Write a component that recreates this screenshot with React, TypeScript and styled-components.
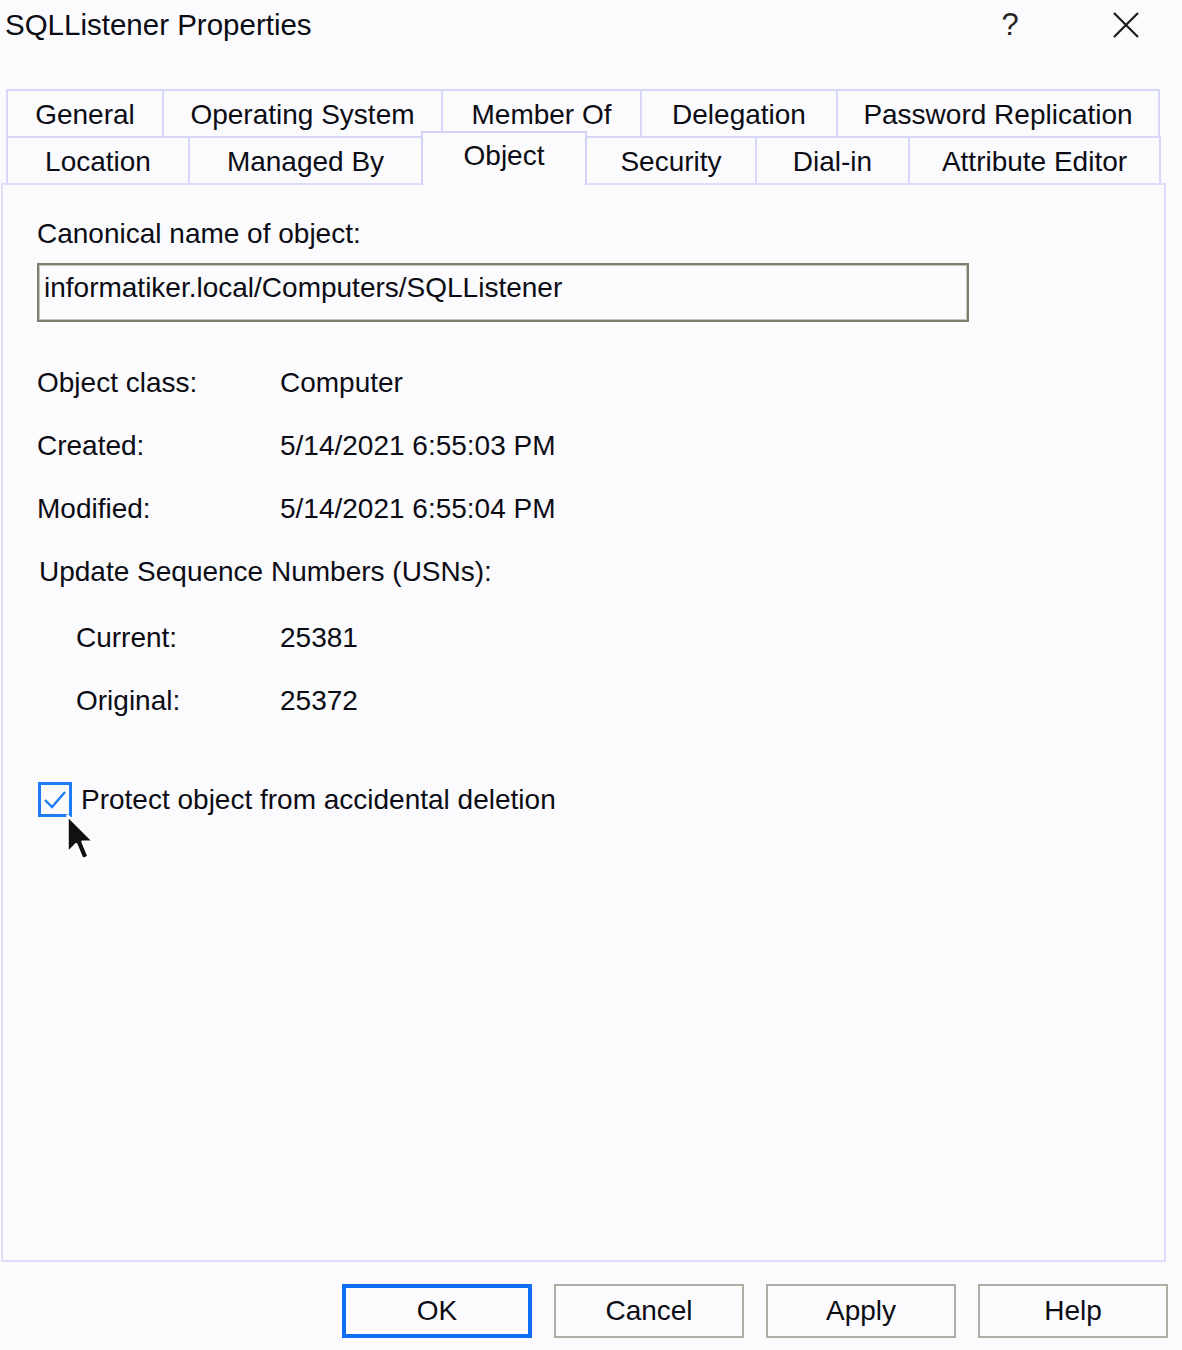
import React from "react";
import styled, { createGlobalStyle, css } from "styled-components";

const Global = createGlobalStyle`
  html, body { margin: 0; padding: 0; background: #fbfbfe; }
  * { box-sizing: border-box; }
`;

const Window = styled.div`
  width: 1182px;
  height: 1350px;
  background: #fbfbfe;
  font-family: "Liberation Sans", Arial, sans-serif;
  font-size: 28px;
  color: #0c0c14;
  display: flex;
  flex-direction: column;
  overflow: hidden;
`;

const TitleBar = styled.div`
  height: 50px;
  display: flex;
  align-items: center;
  padding-left: 5px;
  padding-right: 27px;
  margin-bottom: 39px;
`;

const Title = styled.div`
  font-size: 29.5px;
  flex: 1;
`;

const TitleButton = styled.div<{ $w: number; $gap?: number }>`
  width: ${(p) => p.$w}px;
  height: 46px;
  margin-right: ${(p) => p.$gap ?? 0}px;
  display: flex;
  align-items: center;
  justify-content: center;
  font-size: 31px;
  color: #222;
`;

const TabRows = styled.div`
  margin-left: 6px;
  display: flex;
  flex-direction: column;
`;

const TabRow = styled.div`
  display: flex;
  height: 47px;
`;

const Tab = styled.div<{ $w: number; $selected?: boolean }>`
  width: ${(p) => p.$w}px;
  height: 47px;
  border: 2px solid #d8d8fa;
  border-bottom: none;
  display: flex;
  align-items: center;
  justify-content: center;
  padding-top: 2px;
  white-space: nowrap;
  & + & { margin-left: -2px; }
  ${(p) =>
    p.$selected &&
    css`
      position: relative;
      z-index: 1;
      margin-top: -5px;
      height: 54px;
      padding-top: 0;
      padding-bottom: 6px;
      background: #fbfbfe;
      border-color: #d2d2f6;
    `}
`;

const Panel = styled.div`
  margin-left: 1px;
  width: 1165px;
  height: 1079px;
  border: 2px solid #dcdcfb;
  padding: 32px 0 0 34px;
  display: flex;
  flex-direction: column;
`;

const Label = styled.div`
  line-height: 34px;
  height: 34px;
  white-space: nowrap;
`;

const TextBox = styled.div`
  margin-top: 12px;
  width: 932px;
  height: 59px;
  border: 2px solid #7e7e6e;
  box-shadow: inset 0 0 0 1px #c4c4b8;
  padding: 6px 0 0 5px;
  line-height: 34px;
  white-space: nowrap;
`;

const Fields = styled.div`
  margin-top: 44px;
  display: flex;
  flex-direction: column;
  gap: 29px;
`;

const FieldRow = styled.div<{ $indent?: number; $extra?: number }>`
  display: flex;
  line-height: 34px;
  height: 34px;
  padding-left: ${(p) => p.$indent ?? 0}px;
  margin-top: ${(p) => p.$extra ?? 0}px;
`;

const FieldLabel = styled.div<{ $indent?: number }>`
  width: ${(p) => 243 - (p.$indent ?? 0)}px;
  white-space: nowrap;
`;

const CheckRow = styled.div`
  margin-top: 64px;
  display: flex;
  align-items: center;
  gap: 9px;
  height: 35px;
`;

const CheckBox = styled.div`
  position: relative;
  width: 34px;
  height: 35px;
  margin-left: 1px;
  border: 3px solid #1c7cf4;
  background: #fbfbfe;
  display: flex;
  align-items: center;
  justify-content: center;
`;

const Cursor = styled.svg`
  position: absolute;
  left: 22px;
  top: 28px;
  width: 34px;
  height: 50px;
  overflow: visible;
`;

const ButtonRow = styled.div`
  margin-top: 22px;
  display: flex;
  justify-content: flex-end;
  gap: 22px;
  padding-right: 14px;
`;

const Button = styled.div<{ $default?: boolean }>`
  width: 190px;
  height: 54px;
  display: flex;
  align-items: center;
  justify-content: center;
  border: 2px solid #aeaea2;
  background: #fbfbfe;
  ${(p) =>
    p.$default &&
    css`
      border: 4px solid #0f6ff2;
    `}
`;

const row1 = [
  { t: "General", w: 158 },
  { t: "Operating System", w: 281 },
  { t: "Member Of", w: 201 },
  { t: "Delegation", w: 198 },
  { t: "Password Replication", w: 324 },
];
const row2 = [
  { t: "Location", w: 184 },
  { t: "Managed By", w: 235 },
  { t: "Object", w: 166, sel: true },
  { t: "Security", w: 172 },
  { t: "Dial-in", w: 155 },
  { t: "Attribute Editor", w: 253 },
];

export default function App() {
  return (
    <Window>
      <Global />
      <TitleBar>
        <Title>SQLListener Properties</Title>
        <TitleButton $w={60} $gap={57}>?</TitleButton>
        <TitleButton $w={58}>
          <svg width="28" height="28" viewBox="0 0 28 28">
            <path d="M2 2 L26 26 M26 2 L2 26" stroke="#1a1a1a" strokeWidth="2.2" />
          </svg>
        </TitleButton>
      </TitleBar>
      <TabRows>
        <TabRow>
          {row1.map((t) => (
            <Tab key={t.t} $w={t.w}>
              {t.t}
            </Tab>
          ))}
        </TabRow>
        <TabRow>
          {row2.map((t) => (
            <Tab key={t.t} $w={t.w} $selected={t.sel}>
              {t.t}
            </Tab>
          ))}
        </TabRow>
      </TabRows>
      <Panel>
        <Label>Canonical name of object:</Label>
        <TextBox>informatiker.local/Computers/SQLListener</TextBox>
        <Fields>
          <FieldRow>
            <FieldLabel>Object class:</FieldLabel>
            <span>Computer</span>
          </FieldRow>
          <FieldRow>
            <FieldLabel>Created:</FieldLabel>
            <span>5/14/2021 6:55:03 PM</span>
          </FieldRow>
          <FieldRow>
            <FieldLabel>Modified:</FieldLabel>
            <span>5/14/2021 6:55:04 PM</span>
          </FieldRow>
          <FieldRow $indent={2}>
            <span>Update Sequence Numbers (USNs):</span>
          </FieldRow>
          <FieldRow $indent={39} $extra={3}>
            <FieldLabel $indent={39}>Current:</FieldLabel>
            <span>25381</span>
          </FieldRow>
          <FieldRow $indent={39}>
            <FieldLabel $indent={39}>Original:</FieldLabel>
            <span>25372</span>
          </FieldRow>
        </Fields>
        <CheckRow>
          <CheckBox>
            <svg width="24" height="20" viewBox="0 0 24 20">
              <path d="M2 10 L9 17 L22 2" fill="none" stroke="#1c7cf4" strokeWidth="2.4" />
            </svg>
            <Cursor viewBox="0 0 12 20">
              <path
                d="M1 1 L1 16 L4.5 12.5 L7 18.5 L9.5 17.5 L7 11.5 L11.5 11.5 Z"
                fill="#111"
                stroke="#ffffff"
                strokeWidth="1"
                strokeLinejoin="round"
              />
            </Cursor>
          </CheckBox>
          <span>Protect object from accidental deletion</span>
        </CheckRow>
      </Panel>
      <ButtonRow>
        <Button $default>OK</Button>
        <Button>Cancel</Button>
        <Button>Apply</Button>
        <Button>Help</Button>
      </ButtonRow>
    </Window>
  );
}
